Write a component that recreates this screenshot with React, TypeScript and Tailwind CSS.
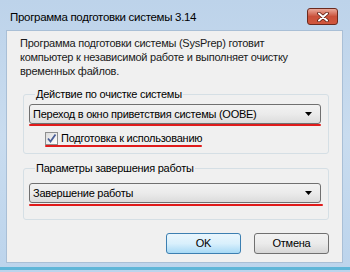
export default function App() {
  return (
    <div
      className="w-[350px] h-[272px] overflow-hidden flex flex-col bg-gradient-to-b from-[#bdd3ea] via-[#c9dcef] to-[#bcd4ec] text-[11px] tracking-[-0.25px] text-black whitespace-nowrap"
      style={{ fontFamily: '"Liberation Sans", Arial, sans-serif' }}
    >
      {/* title bar */}
      <div className="h-[30px] flex items-start shrink-0">
        <div className="pl-[10px] pt-[9px] leading-[16px] text-[11.5px] tracking-[-0.3px]">
          Программа подготовки системы 3.14
        </div>
        <div className="ml-auto mr-[12px] mt-[8px] w-[31px] h-[17px] rounded-[3px] border border-[#6b2a1e] bg-gradient-to-b from-[#e9a99b] via-[#c9503a] to-[#d1563c] flex items-center justify-center">
          <svg width="12" height="10" viewBox="0 0 12 10">
            <path d="M2 1.5 L10 8.5 M10 1.5 L2 8.5" stroke="#5a1a10" strokeWidth="3.6" strokeLinecap="round" />
            <path d="M2 1.5 L10 8.5 M10 1.5 L2 8.5" stroke="#ffffff" strokeWidth="2" strokeLinecap="round" />
          </svg>
        </div>
      </div>

      {/* client area */}
      <div className="ml-[6px] w-[337px] h-[233px] bg-[#f0f0f0] border border-[#a9bfd6] flex flex-col">
        <p className="pl-[13px] pt-[5px] leading-[14px] text-[#1a1a1a]">
          Программа подготовки системы (SysPrep) готовит
          <br />
          компьютер к независимой работе и выполняет очистку
          <br />
          временных файлов.
        </p>

        <fieldset className="ml-[16px] mt-[9px] w-[306px] border border-[#d5dfe5] rounded-[3px] pl-[5px] pr-[7px] pb-[8px]">
          <legend className="ml-[6px] px-[1px] leading-[14px]">Действие по очистке системы</legend>
          <div className="relative mt-[3px]">
            <Combo text="Переход в окно приветствия системы (OOBE)" />
            <div className="absolute left-0 right-0 -bottom-[2px] h-[2px] bg-[#e01b1b] rounded-full" />
          </div>
          <div className="mt-[7px] pl-[16px] flex items-center gap-[3px] leading-[14px]">
            <div className="relative w-[13px] h-[13px] border border-[#8e8f8f] bg-gradient-to-br from-[#dcdcdc] to-[#ffffff] flex items-center justify-center">
              <svg width="11" height="11" viewBox="0 0 11 11">
                <path d="M2 5.5 L4.5 8.5 L9.5 1.5" stroke="#4a5f97" strokeWidth="1.8" fill="none" />
              </svg>
            </div>
            <span className="relative">
              Подготовка к использованию
              <span className="absolute -left-[16px] right-[0px] -bottom-[2px] h-[2px] bg-[#e01b1b] rounded-full" />
            </span>
          </div>
        </fieldset>

        <fieldset className="ml-[16px] mt-[7px] w-[306px] border border-[#d5dfe5] rounded-[3px] pl-[5px] pr-[7px] pb-[16px]">
          <legend className="ml-[6px] px-[1px] leading-[14px]">Параметры завершения работы</legend>
          <div className="relative mt-[8px]">
            <Combo text="Завершение работы" />
            <div className="absolute left-0 -right-[2px] -bottom-[3px] h-[2px] bg-[#e01b1b] rounded-full" />
          </div>
        </fieldset>

        <div className="mt-[13px] pr-[13px] flex justify-end gap-[13px]">
          <button className="w-[75px] h-[21px] rounded-[3px] border border-[#3c7fb1] bg-gradient-to-b from-[#eaf6fd] via-[#d9f0fc] to-[#a7d9f5] leading-[19px]">
            OK
          </button>
          <button className="w-[75px] h-[21px] rounded-[3px] border border-[#707070] bg-gradient-to-b from-[#f2f2f2] via-[#ebebeb] to-[#d6d6d6] leading-[19px]">
            Отмена
          </button>
        </div>
      </div>

      <div className="flex-1 flex flex-col justify-end">
        <div className="h-[3px] bg-[#5fb6d8] mb-[2px]" />
      </div>
    </div>
  );
}

function Combo({ text }: { text: string }) {
  return (
    <div className="h-[20px] rounded-[3px] border border-[#707070] bg-gradient-to-b from-[#f2f2f2] via-[#ebebeb] to-[#dcdcdc] flex items-center pl-[3px] pr-[8px]">
      <span className="leading-[14px]">{text}</span>
      <svg className="ml-auto" width="7" height="4" viewBox="0 0 7 4">
        <path d="M0 0 H7 L3.5 4 Z" fill="#000" />
      </svg>
    </div>
  );
}
